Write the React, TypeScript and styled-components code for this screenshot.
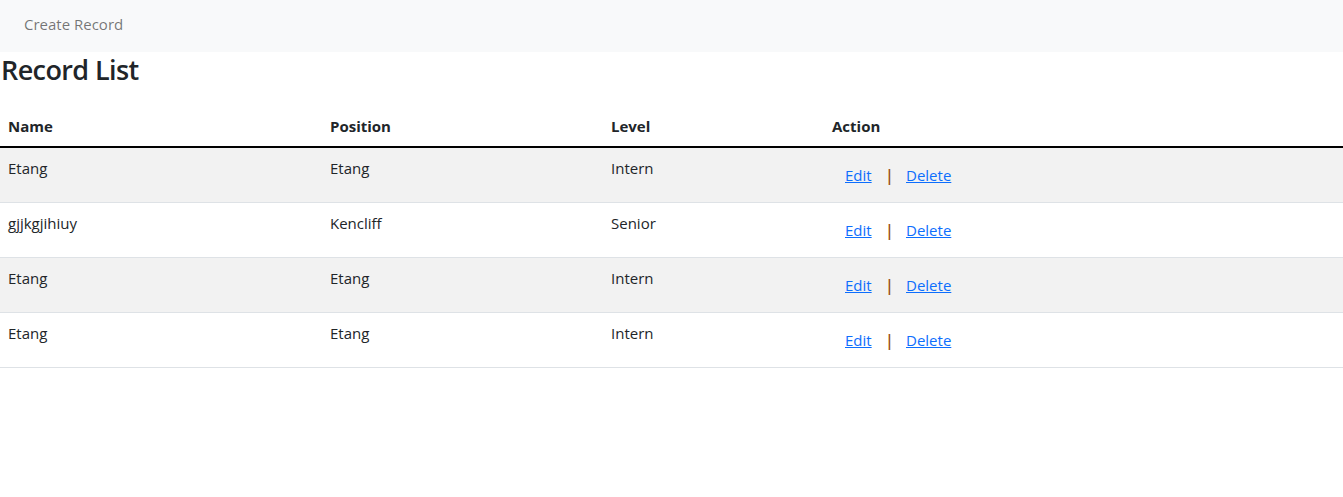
import * as React from "react"
import styled, { createGlobalStyle } from "styled-components"

const GlobalStyle = createGlobalStyle`
  * { box-sizing: border-box; }
  body {
    margin: 0;
    font-family: "Segoe UI", "Open Sans", "Liberation Sans", sans-serif;
    font-size: 16px;
    line-height: 24px;
    color: #212529;
    background: #fff;
  }
`

const Navbar = styled.nav`
  display: flex;
  align-items: center;
  height: 52px;
  padding: 0 24px 4px;
  background-color: #f8f9fa;
`

const NavLink = styled.a`
  color: rgba(0, 0, 0, 0.55);
  text-decoration: none;
  font-size: 15px;
`

const Title = styled.h3`
  margin: 2px 0 8px 1px;
  font-size: 27px;
  font-weight: 600;
  line-height: 1.2;
  letter-spacing: -0.6px;
`

const Table = styled.table`
  width: 100%;
  margin-top: 20px;
  border-collapse: collapse;
  vertical-align: top;
  font-size: 15px;
  line-height: 24px;
`

const HeadCell = styled.th<{ $width?: number }>`
  width: ${p => (p.$width ? `${p.$width}px` : "auto")};
  padding: 8px;
  text-align: left;
  font-weight: 700;
  border-bottom: 2px solid #000;
`

const Row = styled.tr<{ $striped: boolean }>`
  background-color: ${p => (p.$striped ? "#f2f2f2" : "#fff")};
  border-bottom: 1px solid #dee2e6;
`

const Cell = styled.td`
  padding: 8px;
  vertical-align: top;
`

const ActionLink = styled.a`
  display: inline-block;
  padding: 7px 13px;
  color: #0d6efd;
  text-decoration: underline;
`

const Separator = styled.span`
  display: inline-block;
  margin-right: -1px;
  color: #9a4f12;
  font-size: 17px;
  font-weight: 600;
`

const records = [
  { name: "Etang", position: "Etang", level: "Intern" },
  { name: "gjjkgjihiuy", position: "Kencliff", level: "Senior" },
  { name: "Etang", position: "Etang", level: "Intern" },
  { name: "Etang", position: "Etang", level: "Intern" },
]

export default function App() {
  return (
    <>
      <GlobalStyle />
      <Navbar>
        <NavLink href="#">Create Record</NavLink>
      </Navbar>
      <Title>Record List</Title>
      <Table>
        <thead>
          <tr>
            <HeadCell $width={322}>Name</HeadCell>
            <HeadCell $width={281}>Position</HeadCell>
            <HeadCell $width={221}>Level</HeadCell>
            <HeadCell>Action</HeadCell>
          </tr>
        </thead>
        <tbody>
          {records.map((r, i) => (
            <Row key={i} $striped={i % 2 === 0}>
              <Cell>{r.name}</Cell>
              <Cell>{r.position}</Cell>
              <Cell>{r.level}</Cell>
              <Cell>
                <ActionLink href="#">Edit</ActionLink>
                <Separator>|</Separator>
                <ActionLink href="#">Delete</ActionLink>
              </Cell>
            </Row>
          ))}
        </tbody>
      </Table>
    </>
  )
}
